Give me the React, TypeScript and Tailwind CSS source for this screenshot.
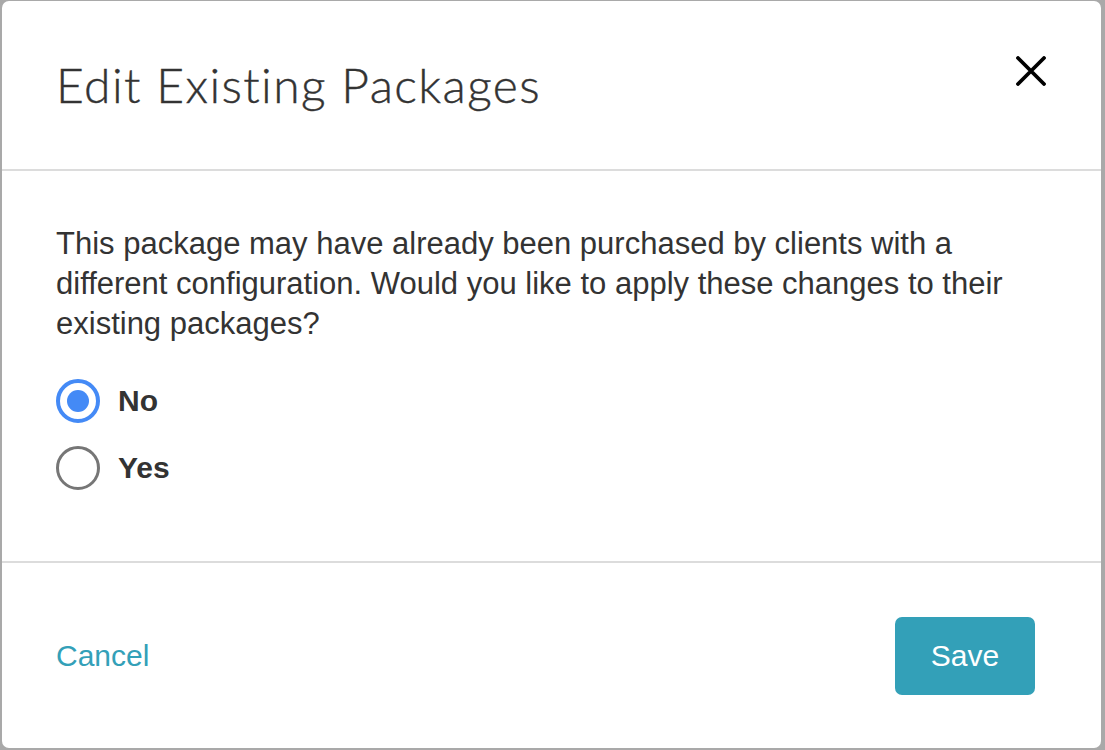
import { useState } from 'react';

type Choice = 'no' | 'yes';

function Radio({ checked, label, onSelect }: { checked: boolean; label: string; onSelect: () => void }) {
  return (
    <label className="flex items-center gap-[18px] cursor-pointer select-none" onClick={onSelect}>
      {checked ? (
        <span className="w-[44px] h-[44px] rounded-full border-[4px] border-[#448af6] flex items-center justify-center">
          <span className="w-[22px] h-[22px] rounded-full bg-[#448af6]" />
        </span>
      ) : (
        <span className="w-[44px] h-[44px] rounded-full border-[3px] border-[#767676]" />
      )}
      <span className="text-[30px] font-bold text-[#333]">{label}</span>
    </label>
  );
}

export default function App() {
  const [choice, setChoice] = useState<Choice>('no');

  return (
    <div className="h-[750px] w-[1105px] bg-[#a9a9a9] pt-[1px] pl-[2px] overflow-hidden" style={{ fontFamily: '"Liberation Sans", Arial, sans-serif' }}>
      <div className="w-[1099px] h-[747px] bg-white rounded-[7px] flex flex-col">
        {/* header */}
        <div className="h-[170px] flex items-center justify-between pl-[54px] pr-[55px] border-b-2 border-[#dcdcdc]">
          <h2 className="text-[48px] font-light tracking-[1.4px] text-[#333] [font-variant-ligatures:none] [-webkit-text-stroke:0.4px_#333]" style={{ fontFamily: 'Lato, "Open Sans", sans-serif' }}>
            Edit Existing Packages
          </h2>
          <button className="w-[30px] h-[30px] -mt-[28px] flex items-center justify-center" aria-label="Close">
            <svg width="30" height="30" viewBox="0 0 30 30" fill="none" stroke="#000" strokeWidth="3.8" strokeLinecap="round">
              <path d="M2 2 L28 28 M28 2 L2 28" />
            </svg>
          </button>
        </div>

        {/* body */}
        <div className="pt-[53px] pb-[71px] pl-[54px] pr-[56px] border-b-2 border-[#dcdcdc]">
          <p className="text-[31px] leading-[40px] text-[#333]">
            This package may have already been purchased by clients with a different configuration. Would you like to apply these changes to their existing packages?
          </p>
          <div className="mt-[34px] flex flex-col gap-[22px]">
            <Radio checked={choice === 'no'} label="No" onSelect={() => setChoice('no')} />
            <Radio checked={choice === 'yes'} label="Yes" onSelect={() => setChoice('yes')} />
          </div>
        </div>

        {/* footer */}
        <div className="flex-1 flex items-center justify-between pl-[54px] pr-[66px]">
          <button className="text-[30px] text-[#33a0b8]">Cancel</button>
          <button className="w-[140px] h-[78px] rounded-[7px] bg-[#33a0b8] text-white text-[30px]">Save</button>
        </div>
      </div>
    </div>
  );
}
